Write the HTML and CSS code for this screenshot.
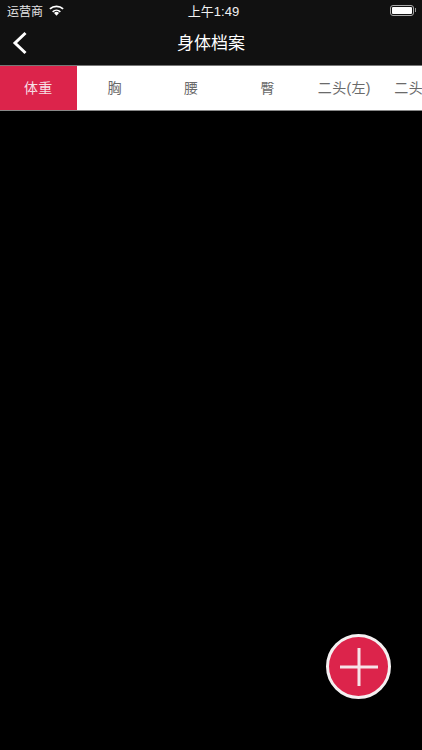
FILE: index.html
```html
<!DOCTYPE html>
<html lang="zh">
<head>
<meta charset="utf-8">
<title>身体档案</title>
<link rel="stylesheet" href="styles.css">
</head>
<body>
<div class="screen">
  <header class="top">
    <div class="status">
      <div class="status-left">
        <span class="carrier">运营商</span>
        <svg class="wifi" width="15" height="11" viewBox="0 0 15 11"><path d="M7.5 10.8 5 8.1a3.5 3.5 0 0 1 5 0Z" fill="#fff"/><path d="M3.1 6.2a6.4 6.4 0 0 1 8.8 0l-1.1 1.2a4.8 4.8 0 0 0-6.6 0Z" fill="#fff"/><path d="M0.3 3.3a10.4 10.4 0 0 1 14.4 0l-1.2 1.3a8.6 8.6 0 0 0-12 0Z" fill="#fff"/></svg>
      </div>
      <span class="time">上午1:49</span>
      <div class="status-right">
        <div class="battery"><div class="battery-fill"></div></div>
        <div class="battery-cap"></div>
      </div>
    </div>
    <div class="nav">
      <svg class="back" width="16" height="24" viewBox="0 0 16 24"><path d="M13.5 2 3 12 13.5 22" fill="none" stroke="#fff" stroke-width="3"/></svg>
      <h1 class="title">身体档案</h1>
    </div>
  </header>
  <nav class="tabs">
    <div class="tab active">体重</div>
    <div class="tab">胸</div>
    <div class="tab">腰</div>
    <div class="tab">臀</div>
    <div class="tab">二头(左)</div>
    <div class="tab">二头(右)</div>
  </nav>
  <button class="fab" aria-label="添加">
    <svg width="40" height="40" viewBox="0 0 40 40"><path d="M20 1V39M1 20H39" stroke="#f6e4e8" stroke-width="3" fill="none"/></svg>
  </button>
</div>
</body>
</html>
```
FILE: styles.css
```css
* { box-sizing: border-box; margin: 0; padding: 0; }
html, body { width: 422px; height: 750px; background: #000; overflow: hidden; }
body { font-family: "Liberation Sans", "Noto Sans CJK SC", sans-serif; color: #fff; }
.screen { position: relative; width: 422px; height: 750px; background: #000; }
.top { height: 65px; background: #111; }
.status { position: relative; height: 20px; display: flex; align-items: center; justify-content: space-between; padding: 0 6px 0 7px; }
.status-left { display: flex; align-items: center; gap: 6px; }
.carrier { font-size: 12px; color: #e6e6e6; }
.wifi { display: block; }
.time { position: absolute; left: 5px; right: 0; text-align: center; font-size: 13px; color: #f2f2f2; }
.status-right { display: flex; align-items: center; gap: 1px; }
.battery { width: 24px; height: 11px; border: 1px solid #aaa; border-radius: 3px; padding: 1px; }
.battery-fill { width: 100%; height: 100%; background: #fff; border-radius: 1px; }
.battery-cap { width: 1px; height: 4px; background: #999; }
.nav { position: relative; height: 45px; display: flex; align-items: center; justify-content: center; padding-bottom: 2px; }
.back { position: absolute; left: 11.5px; top: 11px; }
.title { font-size: 17px; font-weight: 400; color: #fff; }
.tabs { height: 46px; display: flex; overflow: hidden; background: #fff; border-top: 1px solid #777; border-bottom: 1px solid #888; }
.tab { flex: 0 0 76.5px; display: flex; align-items: center; justify-content: center; white-space: nowrap; font-size: 14px; letter-spacing: 0.3px; color: #6a6a6a; padding-bottom: 2px; }
.tab.active { background: #dc244b; color: #f6dfe4; }
.fab { position: absolute; left: 326px; top: 634px; width: 65px; height: 65px; border-radius: 50%; background: #dc244b; border: 3px solid #f4f0f1; display: flex; align-items: center; justify-content: center; }
```
